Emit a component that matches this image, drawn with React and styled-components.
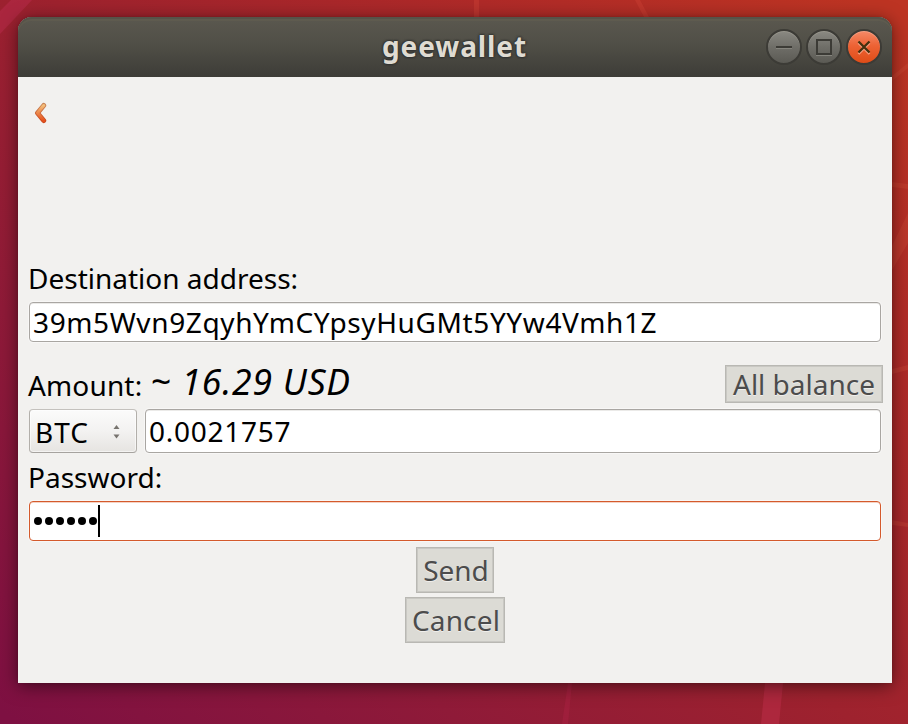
import React from "react";
import styled, { createGlobalStyle } from "styled-components";

const Global = createGlobalStyle`
  * { box-sizing: border-box; }
  body { margin: 0; overflow: hidden; }
`;

const Desktop = styled.main`
  position: relative;
  isolation: isolate;
  width: 908px;
  height: 724px;
  padding: 17px 16px 41px 18px;
  overflow: hidden;
  font-family: "Noto Sans", "Open Sans", sans-serif;
  color: #000;
  background: linear-gradient(42deg, #7e1042 1%, #8f1a38 27%, #9e222e 50%, #af2a28 75%, #bd3423 97%);
`;

const Wallpaper = styled.svg`
  position: absolute;
  inset: 0;
  z-index: -1;
`;

const Window = styled.section`
  display: flex;
  flex-direction: column;
  height: 666px;
  border-radius: 14px 14px 0 0;
  background: #f2f1ef;
  box-shadow: 0 3px 18px rgba(0, 0, 0, 0.5), 0 0 3px rgba(0, 0, 0, 0.15);
`;

const TitleBar = styled.header`
  display: grid;
  grid-template-columns: 1fr auto 1fr;
  align-items: center;
  flex: none;
  height: 60px;
  padding-right: 10px;
  border-radius: 14px 14px 0 0;
  background: linear-gradient(#5b584f, #504f47 45%, #3d3c37);
  box-shadow: inset 0 2px #565349, inset 0 4px #64604f80;
`;

const Title = styled.h1`
  grid-column: 2;
  margin: 0 -9px 2px 0;
  font-size: 28px;
  line-height: 38px;
  font-weight: 700;
  letter-spacing: 0.9px;
  color: #dfdbd2;
  text-shadow: 0 0 2px #2b2d2e, 0 0 2px #2b2d2e, 0 0 3px #2b2d2e;
`;

const Controls = styled.div`
  display: flex;
  justify-content: flex-end;
  gap: 4px;
`;

const ControlButton = styled.button`
  width: 36px;
  height: 36px;
  padding: 0;
  border: 2px solid #3c3b36;
  border-radius: 50%;
  background: ${(p) => (p.$close ? "linear-gradient(#f58a68, #ed6335 45%, #df4c17)" : "linear-gradient(#8a8982, #6f6e68 50%, #5b5a54)")};
  box-shadow: inset 0 1px ${(p) => (p.$close ? "#f6a083" : "#98968d")};

  svg { display: block; }
`;

const Content = styled.div`
  display: flex;
  flex-direction: column;
  padding: 25px 11px 0;
`;

const BackButton = styled.button`
  width: 14px;
  height: 22px;
  margin-left: 5px;
  padding: 0;
  border: 0;
  background: none;

  svg { display: block; }
`;

const Form = styled.form`
  display: flex;
  flex-direction: column;
  margin-top: 134px;
`;

const Label = styled.label`
  margin: ${(p) => p.$above || 0}px 0 ${(p) => p.$below || 0}px -1px;
  font-size: 28px;
  line-height: 40px;
  letter-spacing: ${(p) => p.$spacing || 0}px;
  white-space: pre;
`;

const Field = styled.div`
  display: flex;
  align-items: center;
  flex: ${(p) => (p.$grow ? 1 : "none")};
  height: ${(p) => p.$height || 40}px;
  padding-left: ${(p) => p.$inset || 3}px;
  border: 1px solid ${(p) => (p.$focused ? "#d45a2c" : "#a9a6a2")};
  border-radius: 4px;
  background: #fff;
  box-shadow: 0 0 0 1px #f8f7f6, inset 0 1px ${(p) => (p.$focused ? "#f6d2c4" : "#ebeae8")};
  font-size: 28px;
  line-height: 36px;
  letter-spacing: ${(p) => p.$spacing || 0}px;
  white-space: pre;
`;

const AmountHeader = styled.div`
  display: flex;
  align-items: flex-start;
  height: 67px;
  padding-top: 23px;
`;

const Estimate = styled.output`
  flex: 1;
  margin-left: 8px;
  margin-top: -4px;
  font-size: 35.5px;
  font-style: italic;
  line-height: 40px;
  letter-spacing: 0.8px;
  white-space: pre;
`;

const AmountRow = styled.div`
  display: flex;
  gap: 8px;
`;

const CurrencySelect = styled.button`
  display: flex;
  align-items: center;
  justify-content: space-between;
  width: 108px;
  height: 44px;
  padding: 2px 16px 0 5px;
  border: 1px solid #b2afaa;
  border-color: #c4c1bd #b2afaa #a6a39f;
  border-radius: 4px;
  background: linear-gradient(#fbfbfb, #f3f2f1 50%, #e6e4e1);
  box-shadow: inset 0 0 0 1px #ffffff90;
  color: #000;
  font: inherit;
  font-size: 28px;
  line-height: 38px;
  letter-spacing: 1px;
`;

const ActionButton = styled.button`
  flex: none;
  width: ${(p) => p.$width}px;
  height: ${(p) => p.$height}px;
  margin: ${(p) => p.$margin || 0};
  padding: 0 0 0 ${(p) => p.$shift || 0}px;
  border: 1px solid #b9b8b3;
  outline: 1px solid #c9c8c3;
  outline-offset: -2px;
  background: #dcdbd5;
  color: #4c4c4c;
  font: inherit;
  font-size: 28px;
  line-height: 30px;
  letter-spacing: ${(p) => p.$spacing || 0}px;
  text-shadow: 0 1px #f0efec;
  white-space: pre;
`;

const Actions = styled.div`
  display: flex;
  flex-direction: column;
  align-items: center;
  gap: 4px;
  margin-top: 6px;
`;

const PasswordDots = styled.span`
  display: flex;
  gap: 3px;
`;

const Dot = styled.i`
  width: 8px;
  height: 8px;
  border-radius: 50%;
  background: #000;
`;

const Caret = styled.i`
  width: 2px;
  height: 32px;
  margin-left: 1px;
  background: #000;
`;

export default function App() {
  return (
    <>
      <Global />
      <Desktop>
        <Wallpaper width="908" height="724" viewBox="0 0 908 724">
          <path d="M0 11 11 0H32L0 34Z" fill="#b02a45" opacity=".7" />
          <path d="M765 683h18l-4 41h-18Z" fill="#b32a42" opacity=".75" />
          <path d="M568 683h4l-4 41h-6Z" fill="#b02445" opacity=".4" />
          <path d="M474 0h5v17h-5ZM635 0h5l9 17h-5Z" fill="#d04338" opacity=".4" />
          <path d="M892 76 908 63v5l-16 13ZM892 182l16 2v5l-16-2ZM892 270l16-27v-30l-16 33ZM892 369l16-4v5l-16 4ZM892 520l16 3v4l-16-2Z" fill="#d2533c" opacity=".25" />
        </Wallpaper>
        <Window>
          <TitleBar>
            <Title>geewallet</Title>
            <Controls>
              <ControlButton aria-label="Minimize">
                <svg width="32" height="32"><path d="M8 17.5h16" stroke="#85847d" /><path d="M8 16h16" stroke="#3c3b36" strokeWidth="2" /></svg>
              </ControlButton>
              <ControlButton aria-label="Maximize">
                <svg width="32" height="32"><path d="M8 24.5h16" stroke="#85847d" /><rect x="9" y="9" width="14" height="14" fill="none" stroke="#3c3b36" strokeWidth="2" /></svg>
              </ControlButton>
              <ControlButton aria-label="Close" $close>
                <svg width="32" height="32" fill="none" strokeWidth="2.3"><path d="m10.5 12 11 11m0-11-11 11" stroke="#f6a083" /><path d="m10.5 10.5 11 11m0-11-11 11" stroke="#42310f" /></svg>
              </ControlButton>
            </Controls>
          </TitleBar>
          <Content>
            <BackButton aria-label="Back">
              <svg width="14" height="22" fill="none" strokeLinecap="round" strokeLinejoin="round">
                <defs>
                  <linearGradient id="arrow" x1="0" y1="0" x2="0" y2="1"><stop stopColor="#f3bd79" /><stop offset="1" stopColor="#e6521d" /></linearGradient>
                  <linearGradient id="edge" x1="0" y1="0" x2="0" y2="1"><stop stopColor="#c98455" /><stop offset="1" stopColor="#cc471b" /></linearGradient>
                </defs>
                <path d="M9.7 3.5 3.5 11 9.7 18.5" stroke="url(#edge)" strokeWidth="5" />
                <path d="M9.7 3.5 3.5 11 9.7 18.5" stroke="url(#arrow)" strokeWidth="3" />
              </svg>
            </BackButton>
            <Form>
              <Label $below={4}>Destination address:</Label>
              <Field $spacing={0.62}>39m5Wvn9ZqyhYmCYpsyHuGMt5YYw4Vmh1Z</Field>
              <AmountHeader>
                <Label $spacing={0.15}>Amount:</Label>
                <Estimate>~ 16.29 USD</Estimate>
                <ActionButton type="button" $width={158} $height={38} $margin="0 -2px 0 0">All balance</ActionButton>
              </AmountHeader>
              <AmountRow>
                <CurrencySelect type="button">
                  BTC
                  <svg width="7" height="14" fill="#77736e"><path d="M3.5 0 6.5 4h-6ZM3.5 13.5l3-4h-6Z" /></svg>
                </CurrencySelect>
                <Field $grow $height={44} $spacing={0.75}>0.0021757</Field>
              </AmountRow>
              <Label $above={4} $below={4}>Password:</Label>
              <Field $focused $inset={4}>
                <PasswordDots aria-label="Six characters entered">
                  <Dot /><Dot /><Dot /><Dot /><Dot /><Dot />
                </PasswordDots>
                <Caret />
              </Field>
              <Actions>
                <ActionButton type="button" $width={78} $height={46} $shift={2}>Send</ActionButton>
                <ActionButton type="button" $width={100} $height={46} $shift={2} $spacing={0.15}>Cancel</ActionButton>
              </Actions>
            </Form>
          </Content>
        </Window>
      </Desktop>
    </>
  );
}
